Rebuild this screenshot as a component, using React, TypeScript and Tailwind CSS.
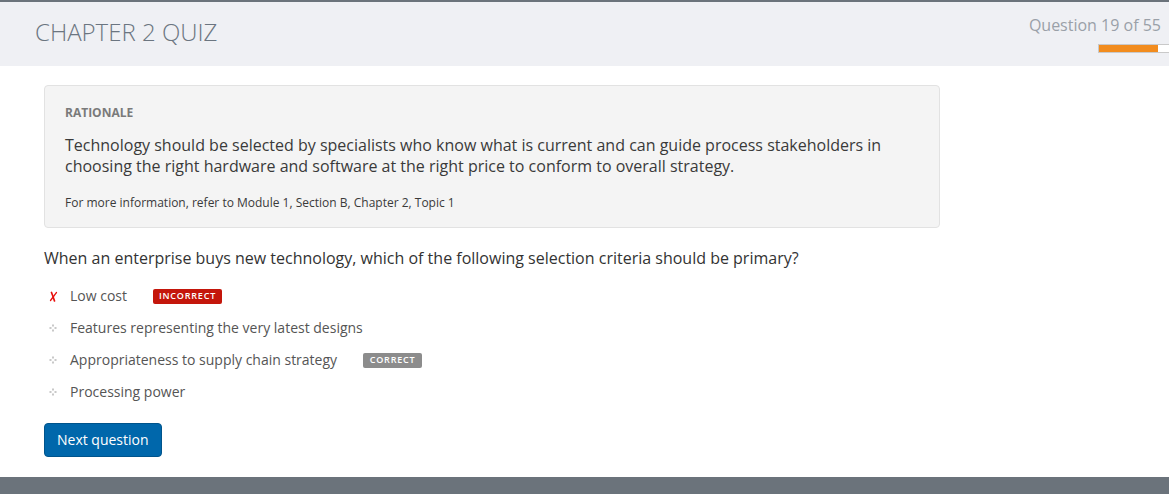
const options = [
  { text: 'Low cost', state: 'incorrect' },
  { text: 'Features representing the very latest designs', state: 'none' },
  { text: 'Appropriateness to supply chain strategy', state: 'correct' },
  { text: 'Processing power', state: 'none' },
];

function Bullet() {
  return (
    <svg width="8" height="8" viewBox="0 0 8 8" className="block">
      <rect x="3" y="0.5" width="2" height="2" fill="#c8c8c8" />
      <rect x="0.5" y="3" width="2" height="2" fill="#c8c8c8" />
      <rect x="5.5" y="3" width="2" height="2" fill="#c8c8c8" />
      <rect x="3" y="5.5" width="2" height="2" fill="#c8c8c8" />
    </svg>
  );
}

function Cross() {
  return (
    <svg width="9" height="11" viewBox="0 0 9 11" className="block">
      <path d="M2.5 1.5 C3.5 4 4.5 7 5.5 10" stroke="#e8110e" strokeWidth="1.7" strokeLinecap="round" fill="none" />
      <path d="M7.5 1.5 C5.5 4 3.5 7 1.5 9.5" stroke="#e8110e" strokeWidth="1.3" strokeLinecap="round" fill="none" />
    </svg>
  );
}

export default function App() {
  return (
    <div className="w-[1169px] h-[494px] flex flex-col bg-white font-['Open_Sans',sans-serif] overflow-hidden">
      {/* Header */}
      <header className="h-[66px] border-t-2 border-[#6b737b] bg-[#eff0f4] flex justify-between">
        <h1 className="pl-[35px] pt-[14px] text-[24px] font-light text-[#6b7580] leading-[32px]">
          CHAPTER 2 QUIZ
        </h1>
        <div className="flex flex-col items-end pt-[13px] pr-[8px]">
          <span className="text-[16px] text-[#9aa0a8] leading-[20px]">Question 19 of 55</span>
          <div className="mt-[9px] mr-[-8px] w-[71px] h-[9px] border border-[#c9c9c9] border-r-0 bg-white flex">
            <div className="w-[59px] h-full bg-[#f28c1e]" />
          </div>
        </div>
      </header>

      {/* Content */}
      <main className="flex-1 px-[44px] pt-[19px]">
        <div className="w-[896px] bg-[#f4f4f4] border border-[#e2e2e2] rounded-[4px] px-[20px] pt-[19px] pb-[16px]">
          <div className="text-[12px] font-bold text-[#7a7a7a] leading-[16px]">RATIONALE</div>
          <p className="mt-[14px] text-[16px] text-[#3a3a3a] leading-[21px]">
            Technology should be selected by specialists who know what is current and can guide process stakeholders in
            choosing the right hardware and software at the right price to conform to overall strategy.
          </p>
          <p className="mt-[18px] text-[12px] text-[#3a3a3a] leading-[16px]">
            For more information, refer to Module 1, Section B, Chapter 2, Topic 1
          </p>
        </div>

        <p className="mt-[19px] text-[16px] text-[#333] leading-[22px]">
          When an enterprise buys new technology, which of the following selection criteria should be primary?
        </p>

        <ul className="mt-[17px] flex flex-col gap-[12px]">
          {options.map((o) => (
            <li key={o.text} className="flex items-center h-[20px]">
              <span className="w-[26px] flex justify-center pr-[10px] pl-[2px]">
                {o.state === 'incorrect' ? <Cross /> : <Bullet />}
              </span>
              <span className="text-[14px] text-[#555] leading-[20px]">{o.text}</span>
              {o.state === 'incorrect' && (
                <span className="ml-[26px] h-[15px] w-[69px] justify-center rounded-[2px] bg-[#c4160b] text-white text-[9px] font-semibold tracking-[0.8px] flex items-center">
                  INCORRECT
                </span>
              )}
              {o.state === 'correct' && (
                <span className="ml-[26px] h-[15px] w-[59px] justify-center rounded-[2px] bg-[#8c8c8c] text-white text-[9px] font-semibold tracking-[0.8px] flex items-center">
                  CORRECT
                </span>
              )}
            </li>
          ))}
        </ul>

        <button className="mt-[21px] h-[34px] px-[12px] rounded-[4px] bg-[#0067ab] border border-[#00548c] text-white text-[14px] font-medium leading-[20px]">
          Next question
        </button>
      </main>

      <footer className="h-[17px] bg-[#6b737b]" />
    </div>
  );
}
